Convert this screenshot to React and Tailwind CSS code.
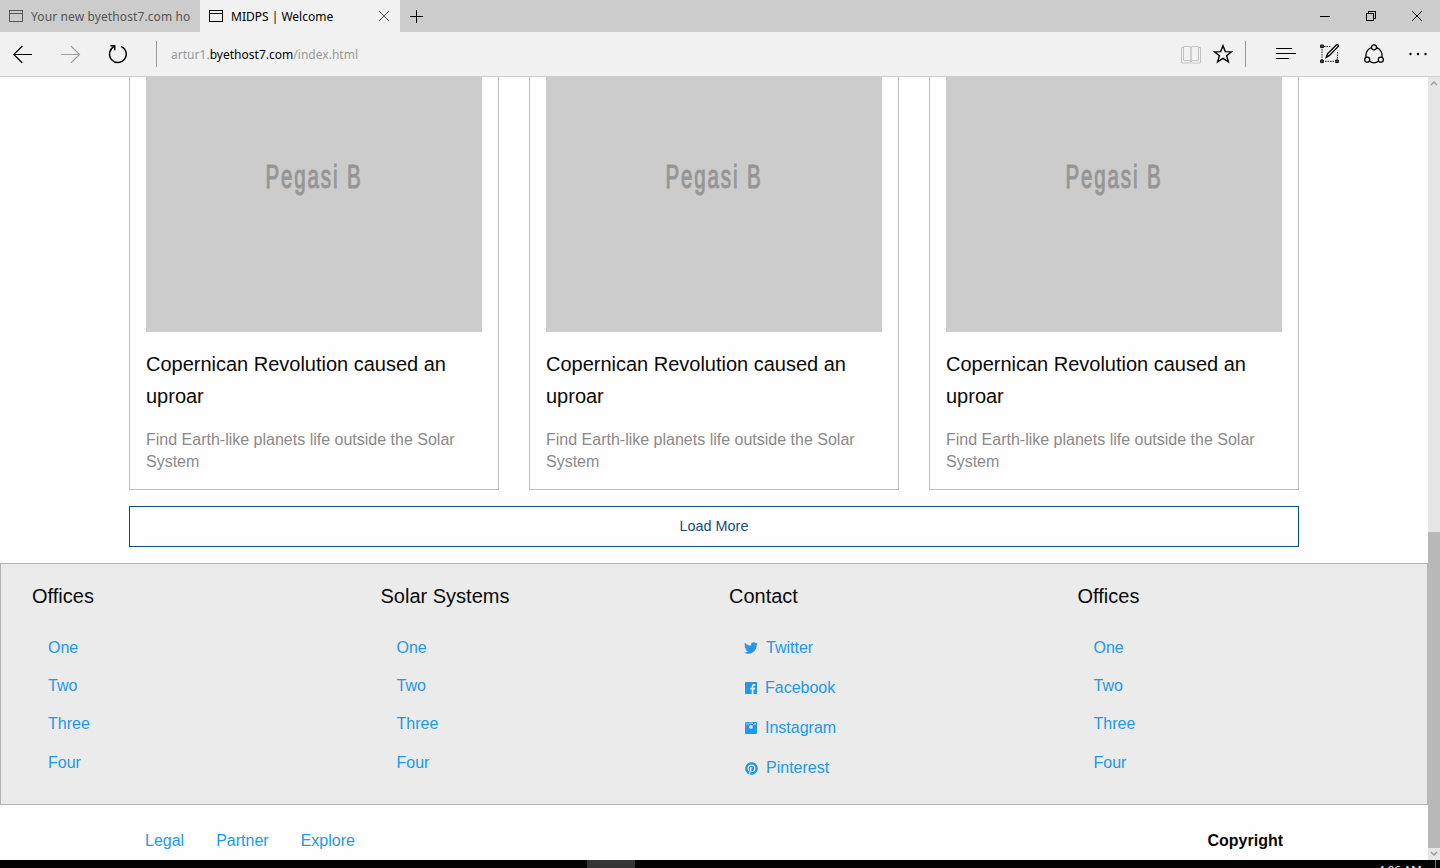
import React from "react";
import { FaTwitter, FaPinterest } from "react-icons/fa";

const WindowIcon = () => (
  <svg width="14" height="13" viewBox="0 0 14 13" fill="none" stroke="currentColor" shapeRendering="crispEdges">
    <rect x="0.5" y="0.5" width="13" height="11" />
    <path d="M1 3.5h12" />
  </svg>
);

const CloseIcon = ({ size }) => (
  <svg width={size} height={size} viewBox="0 0 10 10" fill="none" stroke="currentColor">
    <path d="M0.2 0.2 9.8 9.8M9.8 0.2 0.2 9.8" />
  </svg>
);

function TabBar() {
  return (
    <div className="flex h-8 shrink-0 bg-[#cccccc] text-[12px]">
      <div className="flex w-[200px] items-center overflow-hidden whitespace-nowrap pl-[9px] pr-2 text-[#555555]">
        <WindowIcon />
        <span className="ml-2 pt-px tracking-[0.11px]">Your new byethost7.com ho</span>
      </div>
      <div className="flex w-[200px] items-center whitespace-nowrap bg-[#f1f1f1] pl-[9px] pr-[11px] text-black">
        <WindowIcon />
        <span className="ml-2 grow pt-px">MIDPS | Welcome</span>
        <span className="text-[#444444]"><CloseIcon size={10} /></span>
      </div>
      <div className="flex grow items-center pl-[10px] text-black">
        <svg width="14" height="14" viewBox="0 0 14 14" stroke="currentColor" shapeRendering="crispEdges">
          <path d="M0 7.5h13M6.5 1v13" />
        </svg>
      </div>
      <div className="flex w-[138px] items-center pl-[18px] text-black">
        <svg width="10" height="10" viewBox="0 0 10 10" stroke="currentColor" shapeRendering="crispEdges">
          <path d="M0 5.5h10" />
        </svg>
        <svg className="ml-9" width="10" height="10" viewBox="0 0 10 10" fill="none" stroke="currentColor" shapeRendering="crispEdges">
          <path d="M0.5 2.5h7v7h-7zM2.5 2V0.5h7v7H8" />
        </svg>
        <span className="ml-9"><CloseIcon size={10} /></span>
      </div>
    </div>
  );
}

function Toolbar() {
  return (
    <div className="flex h-[45px] shrink-0 items-center border-b border-[#cccccc] bg-[#f1f1f1] pl-[13px] pr-[13px] text-black">
      <svg width="20" height="18" viewBox="0 0 20 18" fill="none" stroke="currentColor" strokeWidth="1.2">
        <path d="M0.8 9.500H19M9.300 1 0.8 9.500 9.300 18" />
      </svg>
      <svg className="ml-7 text-[#a0a0a0]" width="20" height="18" viewBox="0 0 20 18" fill="none" stroke="currentColor" strokeWidth="1.2">
        <path d="M19 9.500H0M10 1l8.500 8.500L10 18" />
      </svg>
      <svg className="ml-[27px]" width="20" height="20" viewBox="0 0 20 20" fill="none" stroke="currentColor" strokeWidth="1.35">
        <path d="M12.900 2.300A8.400 8.400 0 1 1 6 2.700M2.400 1.700H6.800V6.200" />
      </svg>
      <div className="ml-7 h-[26px] w-px bg-[#999999]" />
      <div className="ml-[14px] grow whitespace-nowrap pt-px text-[12px] tracking-[0.02px] text-[#999999]">
        artur1.<span className="text-black">byethost7.com</span>/index.html
      </div>
      <svg width="20" height="19" viewBox="0 0 20 19" fill="none" stroke="#c4c4c4">
        <path d="M2.500 2.500H0.500V18h19V2.500h-2" />
        <path d="M2.500 1.500h5.500q2 0 2 1.500v14q0-1.500-2-1.500H2.500zM17.500 1.500H12q-2 0-2 1.500v14q0-1.500 2-1.500h5.500z" />
      </svg>
      <svg className="ml-3" width="20" height="20" viewBox="0 0 20 20" fill="none" stroke="currentColor" strokeWidth="1.4">
        <path d="m10 1.700 2.300 5.900 6.300.2-5 3.900 1.800 6.200-5.400-3.600-5.400 3.600 1.800-6.200-5-3.900 6.300-.2z" />
      </svg>
      <div className="ml-3 h-[26px] w-px bg-[#999999]" />
      <svg className="ml-[30px]" width="20" height="14" viewBox="0 0 20 14" stroke="currentColor" shapeRendering="crispEdges">
        <path d="M0 1.500h16M0 6.500h20M0 11.500h13" />
      </svg>
      <svg className="ml-6" width="20" height="20" viewBox="0 0 20 20" fill="none" stroke="currentColor">
        <path d="M4 2.500h7M2 5v11M5 17.300h10M17.500 8v8" strokeWidth="0.900" strokeDasharray="1.500 1" />
        <path d="M0.700 1h2.600v2.600H.7zM.7 16h2.600v2.600H.7zM15.700 16h2.600v2.600h-2.600z" fill="#555555" />
        <path d="m6.200 13.500 1.300-3.700L16.300 1q1-.7 1.700 0t0 1.700l-8.600 8.700z" strokeWidth="1.300" />
      </svg>
      <svg className="ml-6" width="20" height="20" viewBox="0 0 20 20" fill="none" stroke="currentColor" strokeWidth="1.300">
        <circle cx="10" cy="3.300" r="2.500" />
        <circle cx="3.200" cy="15.700" r="2.500" />
        <circle cx="16.800" cy="15.700" r="2.500" />
        <path d="M7.500 3.700A8 8 0 0 0 2.200 13.400M12.500 3.700a8 8 0 0 1 5.300 9.700M5.500 17.300a8 8 0 0 0 9 0" />
      </svg>
      <svg className="ml-[25px]" width="18" height="4" viewBox="0 0 18 4" fill="currentColor">
        <circle cx="1.500" cy="2" r="1.200" /><circle cx="9" cy="2" r="1.200" /><circle cx="16.500" cy="2" r="1.200" />
      </svg>
    </div>
  );
}

function Card() {
  return (
    <article className="flex h-[413px] w-[370px] flex-col border border-t-0 border-[#c1c1c1] px-4">
      <div className="h-[255px] bg-[#cccccc]">
        <svg className="block" width="336" height="255" viewBox="0 0 336 255">
          <text x="119.500" y="111" textLength="97" lengthAdjust="spacingAndGlyphs" fill="#969696" stroke="#969696" strokeWidth="1.100" letterSpacing="3" className="font-['Liberation_Sans',sans-serif] text-[33px]">Pegasi B</text>
        </svg>
      </div>
      <h3 className="mt-4 text-[20px] leading-8 tracking-[-0.01px] text-[#0a0a0a]">Copernican Revolution caused an uproar</h3>
      <p className="mt-[17px] text-[16px] leading-[22.400px] text-[#8a8a8a]">Find Earth-like planets life outside the Solar System</p>
    </article>
  );
}

const FacebookIcon = () => (
  <svg width="12" height="12" viewBox="0 0 12 12" fill="currentColor">
    <path d="M0.600 0h10.800q.6 0 .6.600v10.800q0 .6-.6.600H8.500V7.500H10l.3-1.800H8.500V4.600q0-.8.800-.8h1V2.100H8.800Q6.700 2.100 6.700 4.200v1.500H5.200v1.800h1.500V12H.6q-.6 0-.6-.600V.6q0-.6.600-.6z" />
  </svg>
);

const InstagramIcon = () => (
  <svg width="12" height="12" viewBox="0 0 12 12">
    <rect width="12" height="12" rx="1" fill="currentColor" />
    <path d="M1.300 0.600v2M2.600 0.600v2" stroke="#ebebeb" strokeWidth="0.500" />
    <path d="M9.300 1h1.700v1.700H9.300z" fill="#ebebeb" opacity="0.800" />
    <path d="M3.200 2.800A3 3 0 0 1 8.800 2.800" fill="none" stroke="#ebebeb" strokeWidth="0.700" />
    <circle cx="6" cy="4.900" r="1.900" fill="#d5e6f1" />
  </svg>
);

const social = [
  ["Twitter", <FaTwitter size={14} />, "gap-2"],
  ["Facebook", <FacebookIcon />, "gap-2 pl-px"],
  ["Instagram", <InstagramIcon />, "gap-2 pl-px"],
  ["Pinterest", <FaPinterest size={13} />, "gap-2 pl-px"],
];

function LinkColumn({ title }) {
  return (
    <div className="w-[348.500px] pl-[15px]">
      <h4 className="text-[20px] leading-8 text-[#0a0a0a]">{title}</h4>
      <ul className="pl-4 pt-[24.600px] text-[16px] text-[#2199e8]">
        {["One", "Two", "Three", "Four"].map((name) => (
          <li key={name} className="h-[38.400px] leading-[22px]">{name}</li>
        ))}
      </ul>
    </div>
  );
}

function ContactColumn() {
  return (
    <div className="w-[348.500px] pl-[15px]">
      <h4 className="text-[20px] leading-8 text-[#0a0a0a]">Contact</h4>
      <ul className="pl-[15px] pt-[25px] text-[16px] text-[#2199e8]">
        {social.map(([name, icon, spacing]) => (
          <li key={name} className="h-10 leading-[22px]">
            <a className={"flex items-center " + spacing}>{icon}{name}</a>
          </li>
        ))}
      </ul>
    </div>
  );
}

function Scrollbar() {
  return (
    <div className="flex w-3 shrink-0 flex-col items-center bg-[#e6e6e6] text-[#9b9b9b]">
      <svg className="mt-[3px] h-3 w-2" viewBox="0 0 8 12" fill="none" stroke="currentColor" strokeWidth="1.300">
        <path d="M1 5 4 2l3 3" />
      </svg>
      <div className="mt-[440px] h-[316px] w-3 bg-[#b9b9b9]" />
      <svg className="mt-[2px] h-2 w-2" viewBox="0 0 8 8" fill="none" stroke="currentColor" strokeWidth="1.300">
        <path d="m1 2 3 3 3-3" />
      </svg>
    </div>
  );
}

export default function App() {
  return (
    <div className="flex h-[868px] w-[1440px] flex-col overflow-hidden bg-[#fefefe] font-['Noto_Sans',sans-serif]">
      <TabBar />
      <Toolbar />
      <div className="flex h-[783px] shrink-0">
        <main className="flex w-[1428px] flex-col font-['Liberation_Sans',Arial,sans-serif]">
          <section className="mx-auto flex w-[1170px] flex-col gap-4">
            <div className="flex gap-[30px]"><Card /><Card /><Card /></div>
            <button className="h-[41px] border border-[#074e7b] pb-px text-[14.400px] leading-none text-[#14507a]">Load More</button>
          </section>
          <section className="mt-4 flex h-[242px] border border-[#b2b2b2] bg-[#ebebeb] px-4 pt-4">
            <LinkColumn title="Offices" />
            <LinkColumn title="Solar Systems" />
            <ContactColumn />
            <LinkColumn title="Offices" />
          </section>
          <footer className="mx-auto flex h-[55px] w-[1138px] items-start justify-between pt-6 text-[16px] leading-6">
            <nav className="flex gap-8 text-[#2199e8]"><a>Legal</a><a>Partner</a><a>Explore</a></nav>
            <span className="font-bold text-[#0a0a0a]">Copyright</span>
          </footer>
        </main>
        <Scrollbar />
      </div>
      <div className="flex h-2 shrink-0 items-start bg-[#040404] pl-[587px] text-white">
        <div className="h-2 w-12 bg-[#353535]" />
        <div className="ml-[743px] h-2 w-[57px] overflow-hidden text-[11.500px] leading-4">
          <span className="block pt-[2px]">4:06 AM</span>
        </div>
        <div className="h-2 w-px bg-[#777777]" />
      </div>
    </div>
  );
}
